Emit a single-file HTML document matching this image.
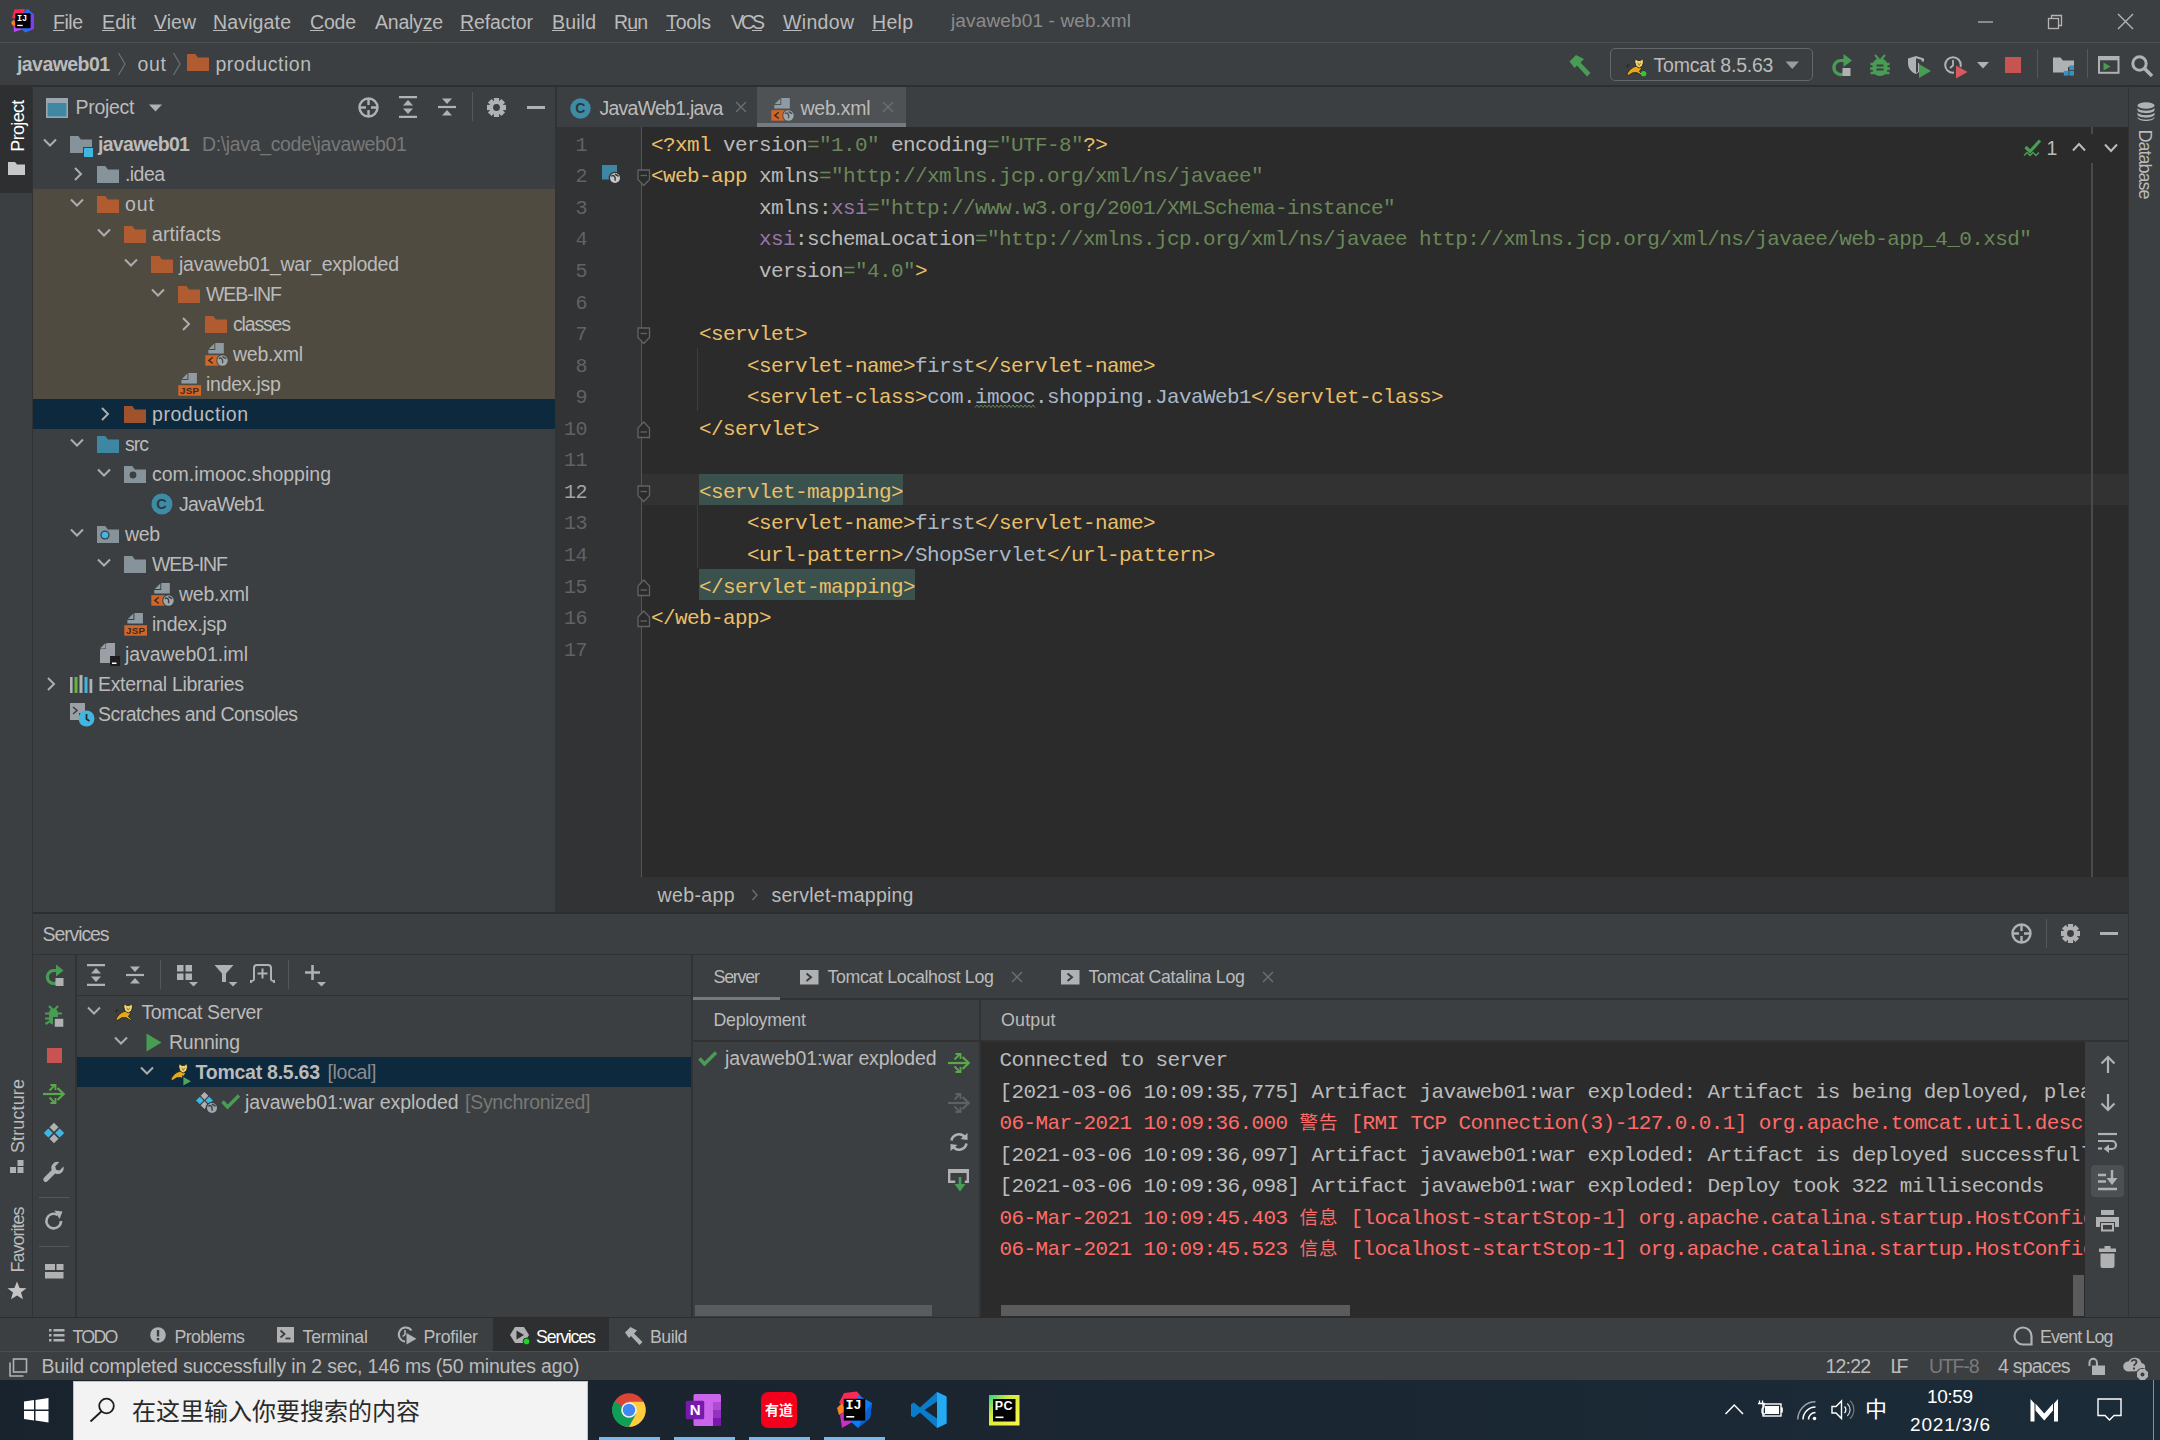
<!DOCTYPE html><html><head><meta charset="utf-8"><title>javaweb01 - web.xml</title><style>
html,body{margin:0;padding:0;background:#3c3f41;}
#r{position:relative;width:2160px;height:1440px;overflow:hidden;background:#3c3f41;font-family:"Liberation Sans","Noto Sans CJK SC",sans-serif;}
#r div,#r span,#r svg{position:absolute;}
#r span{white-space:pre;line-height:30px;}
#r span span,#r span u{position:static;}
#r u{text-underline-offset:0.5px;text-decoration-thickness:1.3px;}
.m{font-family:"Liberation Mono","Noto Sans CJK SC",monospace;font-size:21px;letter-spacing:-0.6px;}
</style></head><body><div id="r">
<div style="left:0px;top:42px;width:2160px;height:1px;background:#515151;"></div>
<svg style="left:10px;top:8px;overflow:visible;" width="26" height="26" viewBox="0 0 26 26"><polygon points="2,10 4.500,1.500 15,1 12,12" fill="#fe2857"/><polygon points="1,14.500 4,11.500 6,17 3,18" fill="#fc801d"/><polygon points="3.500,17.500 12,17 12,21.500 4,24" fill="#b74af7"/><polygon points="12,6 17.500,0.800 24,6.500 24,21 15.500,24.500 11,21" fill="#2d6bf5"/><polygon points="20,6 24,6.500 24,21 20,22" fill="#7a3ff0"/><rect x="5.300" y="5.300" width="15.300" height="15" rx="1" fill="#000"/><rect x="7.200" y="16.800" width="5.500" height="1.300" fill="#fff"/></svg>
<span style="left:17px;top:3.6999999999999993px;font-size:8.5px;color:#fff;font-weight:bold;letter-spacing:0px;font-family:'Liberation Mono',monospace;">IJ</span>
<span style="left:53px;top:6.5px;font-size:19.5px;color:#bbbbbb;letter-spacing:-0.47px;"><u>F</u>ile</span>
<span style="left:102px;top:6.5px;font-size:19.5px;color:#bbbbbb;letter-spacing:0.13px;"><u>E</u>dit</span>
<span style="left:154px;top:6.5px;font-size:19.5px;color:#bbbbbb;letter-spacing:0.03px;"><u>V</u>iew</span>
<span style="left:213px;top:6.5px;font-size:19.5px;color:#bbbbbb;letter-spacing:0.15px;"><u>N</u>avigate</span>
<span style="left:310px;top:6.5px;font-size:19.5px;color:#bbbbbb;letter-spacing:-0.21px;"><u>C</u>ode</span>
<span style="left:375px;top:6.5px;font-size:19.5px;color:#bbbbbb;letter-spacing:-0.23px;">Analy<u>z</u>e</span>
<span style="left:460px;top:6.5px;font-size:19.5px;color:#bbbbbb;letter-spacing:-0.10px;"><u>R</u>efactor</span>
<span style="left:552px;top:6.5px;font-size:19.5px;color:#bbbbbb;letter-spacing:0.16px;"><u>B</u>uild</span>
<span style="left:614px;top:6.5px;font-size:19.5px;color:#bbbbbb;letter-spacing:-0.89px;">R<u>u</u>n</span>
<span style="left:666px;top:6.5px;font-size:19.5px;color:#bbbbbb;letter-spacing:-0.13px;"><u>T</u>ools</span>
<span style="left:731px;top:6.5px;font-size:19.5px;color:#bbbbbb;letter-spacing:-3.05px;">VC<u>S</u></span>
<span style="left:783px;top:6.5px;font-size:19.5px;color:#bbbbbb;letter-spacing:0.33px;"><u>W</u>indow</span>
<span style="left:872px;top:6.5px;font-size:19.5px;color:#bbbbbb;letter-spacing:0.30px;"><u>H</u>elp</span>
<span style="left:951px;top:5.5px;font-size:19px;color:#8c8c8c;letter-spacing:0.14px;">javaweb01 - web.xml</span>
<svg style="left:1976px;top:12px;overflow:visible;" width="20" height="20" viewBox="0 0 20 20"><line x1="2" y1="10" x2="17" y2="10" stroke="#b4b4b4" stroke-width="1.3"/></svg>
<svg style="left:2046px;top:12px;overflow:visible;" width="20" height="20" viewBox="0 0 20 20"><rect x="2.5" y="6.5" width="10" height="10" fill="none" stroke="#b4b4b4" stroke-width="1.3"/><polyline points="5.5,6.5 5.5,3.5 15.5,3.5 15.5,13.5 12.5,13.5" fill="none" stroke="#b4b4b4" stroke-width="1.3"/></svg>
<svg style="left:2115px;top:11px;overflow:visible;" width="22" height="22" viewBox="0 0 22 22"><path d="M3 3L18 18M18 3L3 18" stroke="#b4b4b4" stroke-width="1.4"/></svg>
<div style="left:0px;top:85px;width:2160px;height:2px;background:#2d2f30;"></div>
<span style="left:17px;top:49.0px;font-size:19.5px;color:#bbbbbb;font-weight:bold;letter-spacing:-0.57px;">javaweb01</span>
<span style="left:137.5px;top:49.0px;font-size:19.5px;color:#bbb;letter-spacing:0.70px;">out</span>
<span style="left:215.5px;top:49.0px;font-size:19.5px;color:#bbb;letter-spacing:0.49px;">production</span>
<svg style="left:116.5px;top:52px;overflow:visible;" width="10" height="24" viewBox="0 0 10 24"><polyline points="1.5,1 8,12 1.5,23" fill="none" stroke="#6e7173" stroke-width="1.2"/></svg>
<svg style="left:171.5px;top:52px;overflow:visible;" width="10" height="24" viewBox="0 0 10 24"><polyline points="1.5,1 8,12 1.5,23" fill="none" stroke="#6e7173" stroke-width="1.2"/></svg>
<svg style="left:187px;top:54px;overflow:visible;" width="22" height="17" viewBox="0 0 22 17"><path d="M0 0h8.3l2.6 3.4H22V17H0z" fill="#b15c30"/></svg>
<svg style="left:1567px;top:53px;overflow:visible;" width="26" height="24" viewBox="0 0 26 24"><path d="M2.5 8.5L9 2l8 4-3.5 3.5L23.5 20 20 23.5 10 12.5 7.5 15z" fill="#499c54"/></svg>
<div style="left:1610px;top:48px;width:201px;height:31px;border:1px solid #646769;border-radius:5px;box-sizing:content-box;"></div>
<svg style="left:1625px;top:57.5px;overflow:visible;" width="22" height="18.6" viewBox="0 0 26 22"><path d="M5.500 8.500C2 7 1.500 10 3.500 11.500" fill="none" stroke="#1e1a12" stroke-width="1.100"/><path d="M2 19.500c2-4 5-7.500 9-9l4.500-1.500 4 3.500-2.500 3.500 4 3.500-1.500.8-5.500-3-5 .2-4.500 3z" fill="#e3a81b" stroke="#1e1a12" stroke-width=".9"/><path d="M11.500 4.500l.8-3.500 2.800 2h3.300l2.600-2 .9 3.700-1.400 4.800-3.700 2.300-3.800-2.300z" fill="#f0d67a" stroke="#1e1a12" stroke-width=".9"/><path d="M15 5.500l1.800 3.300 1.800-3.300" fill="none" stroke="#8a6a14" stroke-width="1"/><circle cx="22" cy="18.500" r="3.200" fill="#22d12a"/></svg>
<span style="left:1653.5px;top:49.5px;font-size:19.5px;color:#bbb;letter-spacing:-0.21px;">Tomcat 8.5.63</span>
<svg style="left:1785px;top:61px;overflow:visible;" width="15" height="9" viewBox="0 0 15 9"><polygon points="0.5,0.5 14,0.5 7.25,8" fill="#9a9da0"/></svg>
<svg style="left:1831px;top:54px;overflow:visible;" width="22" height="23" viewBox="0 0 22 23"><path d="M14.500 6.500h-4.500a7 7 0 1 0 3.500 13" fill="none" stroke="#499c54" stroke-width="3.200"/><polygon points="12.500,0 21,6.500 12.500,13" fill="#499c54"/><rect x="11.500" y="14" width="8" height="8" fill="#afb1b3"/></svg>
<svg style="left:1869px;top:54px;overflow:visible;" width="22" height="23" viewBox="0 0 22 23"><path d="M6 1l3.500 4M16 1l-3.500 4" stroke="#499c54" stroke-width="2"/><path d="M1.500 10h19M1 14.500h20M1.500 19h19" stroke="#499c54" stroke-width="2.400"/><rect x="3.500" y="4.500" width="15" height="17.500" rx="7" fill="#499c54"/><path d="M7.500 11.500h7M7.500 15.500h7" stroke="#3c3f41" stroke-width="1.800"/></svg>
<svg style="left:1907px;top:55px;overflow:visible;" width="26" height="24" viewBox="0 0 26 24"><path d="M1 3.5L9 1l8 2.5v3h-5V17l-3 2C4 17 1 13 1 8z" fill="#afb1b3"/><path d="M9 3v14" stroke="#3c3f41" stroke-width="0"/><path d="M9 3.2l5.5 1.6V8H11v8.5L9 18z" fill="#3c3f41"/><polygon points="12,9 24,16 12,23" fill="#499c54"/></svg>
<svg style="left:1943px;top:55px;overflow:visible;" width="26" height="24" viewBox="0 0 26 24"><circle cx="10" cy="10" r="7.8" fill="none" stroke="#afb1b3" stroke-width="2"/><path d="M10 5v5.5l-3 2.5" fill="none" stroke="#afb1b3" stroke-width="1.8"/><polygon points="11,8.5 11,24 25,16.2" fill="#3c3f41"/><polygon points="13,10.5 13,23.5 24.5,17" fill="#db5860"/></svg>
<svg style="left:1977px;top:62px;overflow:visible;" width="12" height="7" viewBox="0 0 12 7"><polygon points="0,0 12,0 6,6.5" fill="#afb1b3"/></svg>
<div style="left:2005px;top:57px;width:16px;height:16px;background:#c75450;"></div>
<div style="left:2037px;top:49px;width:1px;height:29px;background:#555759;"></div>
<svg style="left:2052.5px;top:56.5px;overflow:visible;" width="22" height="19" viewBox="0 0 22 19"><path d="M0 0.500h7.500l2.500 3H21v6.500h-6v5.500H0z" fill="#afb1b3"/><rect x="16.300" y="8.400" width="4.700" height="4.700" fill="#3592c4"/><rect x="10.800" y="13.900" width="4.700" height="4.700" fill="#3592c4"/><rect x="16.300" y="13.900" width="4.700" height="4.700" fill="#3592c4"/></svg>
<div style="left:2087px;top:49px;width:1px;height:29px;background:#555759;"></div>
<svg style="left:2098px;top:56px;overflow:visible;" width="22" height="18" viewBox="0 0 22 18"><rect x="1" y="1" width="19.500" height="15.800" fill="none" stroke="#afb1b3" stroke-width="2"/><rect x="1" y="1" width="19.500" height="3.300" fill="#afb1b3"/><polygon points="5.500,6.500 5.500,14.500 12.500,10.500" fill="#499c54"/></svg>
<svg style="left:2130px;top:54px;overflow:visible;" width="24" height="24" viewBox="0 0 24 24"><circle cx="9.5" cy="9.5" r="6.7" fill="none" stroke="#afb1b3" stroke-width="3"/><path d="M14.5 14.5L22 22" stroke="#afb1b3" stroke-width="3.6"/></svg>
<div style="left:0px;top:87px;width:32px;height:106px;background:#2d2f30;"></div>
<div style="left:32px;top:87px;width:1px;height:1230px;background:#323232;"></div>
<span style="left:17.5px;top:125.5px;font-size:18px;color:#ffffff;letter-spacing:-0.67px;transform:translate(-50%,-50%) rotate(-90deg);line-height:20px;">Project</span>
<svg style="left:8px;top:162px;overflow:visible;" width="18" height="14" viewBox="0 0 18 14"><path d="M0 0h7l2 2.6h8V13H0z" fill="#c8c8c8"/></svg>
<span style="left:17.5px;top:1115.5px;font-size:18px;color:#bbb;letter-spacing:0.12px;transform:translate(-50%,-50%) rotate(-90deg);line-height:20px;">Structure</span>
<svg style="left:10px;top:1159.5px;overflow:visible;" width="14" height="14" viewBox="0 0 14 14"><rect x="0" y="7" width="6" height="6" fill="#afb1b3"/><rect x="7.5" y="7" width="6" height="6" fill="#afb1b3"/><rect x="7.5" y="0" width="6" height="6" fill="#afb1b3"/></svg>
<span style="left:17.5px;top:1240px;font-size:18px;color:#bbb;letter-spacing:-1.00px;transform:translate(-50%,-50%) rotate(-90deg);line-height:20px;">Favorites</span>
<svg style="left:7px;top:1281px;overflow:visible;" width="20" height="19" viewBox="0 0 20 19"><polygon points="10,0.5 12.6,7 19.5,7.2 14,11.6 16,18.3 10,14.4 4,18.3 6,11.6 0.5,7.2 7.4,7" fill="#c4c4c4"/></svg>
<svg style="left:46px;top:98px;overflow:visible;" width="22" height="20" viewBox="0 0 22 20"><rect x="0.8" y="0.8" width="20.4" height="18.4" fill="#3f88a3" stroke="#9aa7b0" stroke-width="1.6"/><rect x="0" y="0" width="22" height="5" fill="#9aa7b0"/></svg>
<span style="left:75.5px;top:92.0px;font-size:19.5px;color:#bbb;letter-spacing:-0.28px;">Project</span>
<svg style="left:149px;top:104px;overflow:visible;" width="13" height="8" viewBox="0 0 13 8"><polygon points="0,0.5 13,0.5 6.5,7.5" fill="#afb1b3"/></svg>
<svg style="left:358.0px;top:96.5px;overflow:visible;" width="21" height="21" viewBox="0 0 21 21"><circle cx="10.5" cy="10.5" r="9" fill="none" stroke="#afb1b3" stroke-width="2.400"/><path d="M10.5 1v7M10.5 20v-7M1 10.5h7M20 10.5h-7" stroke="#afb1b3" stroke-width="2.400"/></svg>
<svg style="left:399px;top:96px;overflow:visible;" width="18" height="22" viewBox="0 0 18 22"><path d="M0 1.2h18M0 20.8h18" stroke="#afb1b3" stroke-width="2.2"/><polygon points="9,4 14,9.5 4,9.5" fill="#afb1b3"/><polygon points="9,18 14,12.5 4,12.5" fill="#afb1b3"/></svg>
<svg style="left:438px;top:96px;overflow:visible;" width="18" height="22" viewBox="0 0 18 22"><path d="M0 11h18" stroke="#afb1b3" stroke-width="2.2"/><polygon points="9,8 14,2.5 4,2.5" fill="#afb1b3"/><polygon points="9,14 14,19.5 4,19.5" fill="#afb1b3"/></svg>
<div style="left:472px;top:92px;width:1px;height:29px;background:#555759;"></div>
<svg style="left:486.0px;top:96.5px;overflow:visible;" width="21.0" height="21.0" viewBox="0 0 21.0 21.0"><g transform="translate(10.5,10.5)"><rect x="-2.6" y="-9.5" width="5.2" height="5" transform="rotate(0)" fill="#afb1b3"/><rect x="-2.6" y="-9.5" width="5.2" height="5" transform="rotate(45)" fill="#afb1b3"/><rect x="-2.6" y="-9.5" width="5.2" height="5" transform="rotate(90)" fill="#afb1b3"/><rect x="-2.6" y="-9.5" width="5.2" height="5" transform="rotate(135)" fill="#afb1b3"/><rect x="-2.6" y="-9.5" width="5.2" height="5" transform="rotate(180)" fill="#afb1b3"/><rect x="-2.6" y="-9.5" width="5.2" height="5" transform="rotate(225)" fill="#afb1b3"/><rect x="-2.6" y="-9.5" width="5.2" height="5" transform="rotate(270)" fill="#afb1b3"/><rect x="-2.6" y="-9.5" width="5.2" height="5" transform="rotate(315)" fill="#afb1b3"/><circle r="7.03" fill="#afb1b3"/><circle r="3.42" fill="#3c3f41"/></g></svg>
<div style="left:527.0px;top:105.5px;width:18px;height:3px;background:#afb1b3;"></div>
<div style="left:33px;top:189px;width:522px;height:210px;background:#4f4b41;"></div>
<div style="left:33px;top:399px;width:522px;height:30px;background:#0d293e;"></div>
<svg style="left:42px;top:137px;overflow:visible;" width="16" height="12" viewBox="0 0 16 12"><polyline points="2,2.5 8,8.5 14,2.5" fill="none" stroke="#adadad" stroke-width="2"/></svg>
<svg style="left:70px;top:135.5px;overflow:visible;" width="22" height="17" viewBox="0 0 22 17"><path d="M0 0h8.3l2.6 3.4H22V17H0z" fill="#87939a"/></svg>
<div style="left:82.5px;top:147px;width:2px;height:10px;background:#3c3f41;"></div>
<div style="left:82.5px;top:146.5px;width:10px;height:2px;background:#3c3f41;"></div>
<div style="left:84px;top:147.5px;width:9px;height:9px;background:#40b6e0;"></div>
<span style="left:98px;top:129.0px;font-size:19.5px;color:#bbb;font-weight:bold;letter-spacing:-0.70px;">javaweb01</span>
<svg style="left:72px;top:166px;overflow:visible;" width="12" height="16" viewBox="0 0 12 16"><polyline points="3,2 9,8 3,14" fill="none" stroke="#adadad" stroke-width="2"/></svg>
<svg style="left:97px;top:165.5px;overflow:visible;" width="22" height="17" viewBox="0 0 22 17"><path d="M0 0h8.3l2.6 3.4H22V17H0z" fill="#87939a"/></svg>
<span style="left:125px;top:159.0px;font-size:19.5px;color:#bbb;letter-spacing:-0.57px;">.idea</span>
<svg style="left:69px;top:197px;overflow:visible;" width="16" height="12" viewBox="0 0 16 12"><polyline points="2,2.5 8,8.5 14,2.5" fill="none" stroke="#adadad" stroke-width="2"/></svg>
<svg style="left:97px;top:195.5px;overflow:visible;" width="22" height="17" viewBox="0 0 22 17"><path d="M0 0h8.3l2.6 3.4H22V17H0z" fill="#b15c30"/></svg>
<span style="left:125px;top:189.0px;font-size:19.5px;color:#bbb;letter-spacing:0.95px;">out</span>
<svg style="left:96px;top:227px;overflow:visible;" width="16" height="12" viewBox="0 0 16 12"><polyline points="2,2.5 8,8.5 14,2.5" fill="none" stroke="#adadad" stroke-width="2"/></svg>
<svg style="left:124px;top:225.5px;overflow:visible;" width="22" height="17" viewBox="0 0 22 17"><path d="M0 0h8.3l2.6 3.4H22V17H0z" fill="#b15c30"/></svg>
<span style="left:152px;top:219.0px;font-size:19.5px;color:#bbb;letter-spacing:0.09px;">artifacts</span>
<svg style="left:123px;top:257px;overflow:visible;" width="16" height="12" viewBox="0 0 16 12"><polyline points="2,2.5 8,8.5 14,2.5" fill="none" stroke="#adadad" stroke-width="2"/></svg>
<svg style="left:151px;top:255.5px;overflow:visible;" width="22" height="17" viewBox="0 0 22 17"><path d="M0 0h8.3l2.6 3.4H22V17H0z" fill="#b15c30"/></svg>
<span style="left:179px;top:249.0px;font-size:19.5px;color:#bbb;letter-spacing:-0.26px;">javaweb01_war_exploded</span>
<svg style="left:150px;top:287px;overflow:visible;" width="16" height="12" viewBox="0 0 16 12"><polyline points="2,2.5 8,8.5 14,2.5" fill="none" stroke="#adadad" stroke-width="2"/></svg>
<svg style="left:178px;top:285.5px;overflow:visible;" width="22" height="17" viewBox="0 0 22 17"><path d="M0 0h8.3l2.6 3.4H22V17H0z" fill="#b15c30"/></svg>
<span style="left:206px;top:279.0px;font-size:19.5px;color:#bbb;letter-spacing:-1.05px;">WEB-INF</span>
<svg style="left:180px;top:316px;overflow:visible;" width="12" height="16" viewBox="0 0 12 16"><polyline points="3,2 9,8 3,14" fill="none" stroke="#adadad" stroke-width="2"/></svg>
<svg style="left:205px;top:315.5px;overflow:visible;" width="22" height="17" viewBox="0 0 22 17"><path d="M0 0h8.3l2.6 3.4H22V17H0z" fill="#b15c30"/></svg>
<span style="left:233px;top:309.0px;font-size:19.5px;color:#bbb;letter-spacing:-1.17px;">classes</span>
<svg style="left:205px;top:343.2px;overflow:visible;" width="24" height="24" viewBox="0 0 24 24"><g transform="translate(3.3,0)" fill="#8f9ba3"><path d="M7 0h8.5v10.5H0V6.9h7z"/><path d="M0.5 6L6 0.5V6z"/></g><rect x="0.3" y="12.2" width="14" height="10.5" fill="#d1662b"/><path d="M7.8 14.3l-4 3.1 4 3.1" fill="none" stroke="#3f2a1d" stroke-width="1.4"/><circle cx="17.5" cy="17.5" r="6.3" fill="#4f4b41"/><circle cx="17.5" cy="17.5" r="5.2" fill="#9ea7ae"/><path d="M14 16c1.200-2 2.800-.5 3.500.8s-.8 2.200.6 3.200M17.500 13.500c1 1.400 2.500.5 3.500 2.500" fill="none" stroke="#4f4b41" stroke-width="1.400"/></svg>
<span style="left:233px;top:339.0px;font-size:19.5px;color:#bbb;letter-spacing:-0.25px;">web.xml</span>
<svg style="left:178px;top:373.2px;overflow:visible;" width="24" height="24" viewBox="0 0 24 24"><g transform="translate(3.4,0)" fill="#8f9ba3"><path d="M7 0h8.5v10.5H0V6.9h7z"/><path d="M0.5 6L6 0.5V6z"/></g><rect x="0.3" y="12.2" width="22.700" height="10.500" fill="#d1662b"/></svg>
<span style="left:180px;top:376.0px;font-size:9.8px;color:#3f2a1d;font-weight:bold;letter-spacing:0.24px;">JSP</span>
<span style="left:206px;top:369.0px;font-size:19.5px;color:#bbb;letter-spacing:-0.25px;">index.jsp</span>
<svg style="left:99px;top:406px;overflow:visible;" width="12" height="16" viewBox="0 0 12 16"><polyline points="3,2 9,8 3,14" fill="none" stroke="#adadad" stroke-width="2"/></svg>
<svg style="left:124px;top:405.5px;overflow:visible;" width="22" height="17" viewBox="0 0 22 17"><path d="M0 0h8.3l2.6 3.4H22V17H0z" fill="#a0522d"/></svg>
<span style="left:152px;top:399.0px;font-size:19.5px;color:#bbb;letter-spacing:0.55px;">production</span>
<svg style="left:69px;top:437px;overflow:visible;" width="16" height="12" viewBox="0 0 16 12"><polyline points="2,2.5 8,8.5 14,2.5" fill="none" stroke="#adadad" stroke-width="2"/></svg>
<svg style="left:97px;top:435.5px;overflow:visible;" width="22" height="17" viewBox="0 0 22 17"><path d="M0 0h8.3l2.6 3.4H22V17H0z" fill="#3e87a3"/></svg>
<span style="left:125px;top:429.0px;font-size:19.5px;color:#bbb;letter-spacing:-1.00px;">src</span>
<svg style="left:96px;top:467px;overflow:visible;" width="16" height="12" viewBox="0 0 16 12"><polyline points="2,2.5 8,8.5 14,2.5" fill="none" stroke="#adadad" stroke-width="2"/></svg>
<svg style="left:124px;top:465.5px;overflow:visible;" width="22" height="17" viewBox="0 0 22 17"><path d="M0 0h8.3l2.6 3.4H22V17H0z" fill="#87939a"/></svg>
<svg style="left:128.5px;top:470.5px;overflow:visible;" width="8" height="8" viewBox="0 0 8 8"><circle cx="4" cy="4" r="3.4" fill="#3c3f41"/></svg>
<span style="left:152px;top:459.0px;font-size:19.5px;color:#bbb;letter-spacing:0.01px;">com.imooc.shopping</span>
<svg style="left:151px;top:493px;overflow:visible;" width="22" height="22" viewBox="0 0 22 22"><circle cx="11" cy="11" r="10.5" fill="#3d8ba5"/></svg>
<span style="left:156.3px;top:488.7px;font-size:14.5px;color:#2a3b42;font-weight:bold;">C</span>
<span style="left:179px;top:489.0px;font-size:19.5px;color:#bbb;letter-spacing:-0.83px;">JavaWeb1</span>
<svg style="left:69px;top:527px;overflow:visible;" width="16" height="12" viewBox="0 0 16 12"><polyline points="2,2.5 8,8.5 14,2.5" fill="none" stroke="#adadad" stroke-width="2"/></svg>
<svg style="left:97px;top:525.5px;overflow:visible;" width="22" height="17" viewBox="0 0 22 17"><path d="M0 0h8.3l2.6 3.4H22V17H0z" fill="#87939a"/></svg>
<svg style="left:100px;top:530px;overflow:visible;" width="10" height="10" viewBox="0 0 10 10"><circle cx="5" cy="5" r="4.6" fill="#3c3f41"/><circle cx="5" cy="5" r="3.3" fill="#40b6e0"/></svg>
<span style="left:125px;top:519.0px;font-size:19.5px;color:#bbb;letter-spacing:-0.39px;">web</span>
<svg style="left:96px;top:557px;overflow:visible;" width="16" height="12" viewBox="0 0 16 12"><polyline points="2,2.5 8,8.5 14,2.5" fill="none" stroke="#adadad" stroke-width="2"/></svg>
<svg style="left:124px;top:555.5px;overflow:visible;" width="22" height="17" viewBox="0 0 22 17"><path d="M0 0h8.3l2.6 3.4H22V17H0z" fill="#87939a"/></svg>
<span style="left:152px;top:549.0px;font-size:19.5px;color:#bbb;letter-spacing:-1.05px;">WEB-INF</span>
<svg style="left:151px;top:583.2px;overflow:visible;" width="24" height="24" viewBox="0 0 24 24"><g transform="translate(3.3,0)" fill="#8f9ba3"><path d="M7 0h8.5v10.5H0V6.9h7z"/><path d="M0.5 6L6 0.5V6z"/></g><rect x="0.3" y="12.2" width="14" height="10.5" fill="#d1662b"/><path d="M7.8 14.3l-4 3.1 4 3.1" fill="none" stroke="#3f2a1d" stroke-width="1.4"/><circle cx="17.5" cy="17.5" r="6.3" fill="#3c3f41"/><circle cx="17.5" cy="17.5" r="5.2" fill="#9ea7ae"/><path d="M14 16c1.200-2 2.800-.5 3.500.8s-.8 2.200.6 3.200M17.500 13.500c1 1.400 2.500.5 3.500 2.500" fill="none" stroke="#3c3f41" stroke-width="1.400"/></svg>
<span style="left:179px;top:579.0px;font-size:19.5px;color:#bbb;letter-spacing:-0.25px;">web.xml</span>
<svg style="left:124px;top:613.2px;overflow:visible;" width="24" height="24" viewBox="0 0 24 24"><g transform="translate(3.4,0)" fill="#8f9ba3"><path d="M7 0h8.5v10.5H0V6.9h7z"/><path d="M0.5 6L6 0.5V6z"/></g><rect x="0.3" y="12.2" width="22.700" height="10.500" fill="#d1662b"/></svg>
<span style="left:126px;top:616.0px;font-size:9.8px;color:#3f2a1d;font-weight:bold;letter-spacing:0.24px;">JSP</span>
<span style="left:152px;top:609.0px;font-size:19.5px;color:#bbb;letter-spacing:-0.25px;">index.jsp</span>
<svg style="left:100px;top:643px;overflow:visible;" width="22" height="24" viewBox="0 0 22 24"><path d="M7 0H15V20H0V7z" fill="#9aa0a5"/><path d="M0 6L6 0V6z" fill="#3c3f41"/><path d="M0 5.500L5.500 0V5.500z" fill="#9aa0a5"/><rect x="10" y="13" width="10" height="10" fill="#1e1e1e"/><rect x="12" y="19.500" width="4.500" height="1.500" fill="#fff"/></svg>
<span style="left:125px;top:639.0px;font-size:19.5px;color:#bbb;letter-spacing:-0.05px;">javaweb01.iml</span>
<svg style="left:45px;top:676px;overflow:visible;" width="12" height="16" viewBox="0 0 12 16"><polyline points="3,2 9,8 3,14" fill="none" stroke="#adadad" stroke-width="2"/></svg>
<svg style="left:70px;top:675px;overflow:visible;" width="23" height="18" viewBox="0 0 23 18"><rect x="0" y="2" width="2.6" height="16" fill="#afb1b3"/><rect x="4.500" y="2" width="3" height="16" fill="#62b543"/><rect x="9.500" y="0" width="3" height="18" fill="#afb1b3"/><rect x="14.500" y="2" width="3" height="16" fill="#40b6e0"/><rect x="19.500" y="4" width="2.800" height="14" fill="#afb1b3"/></svg>
<span style="left:98px;top:669.0px;font-size:19.5px;color:#bbb;letter-spacing:-0.34px;">External Libraries</span>
<svg style="left:70px;top:702px;overflow:visible;" width="25" height="25" viewBox="0 0 25 25"><path d="M0 1H15V11H9V18H0z" fill="#9aa0a5"/><path d="M3 5l4 3.500-4 3.500" fill="none" stroke="#3c3f41" stroke-width="1.600"/><circle cx="16.500" cy="16.500" r="8" fill="#40b6e0"/><path d="M16.500 12v5l3 2" fill="none" stroke="#2b2b2b" stroke-width="1.800"/></svg>
<span style="left:98px;top:699.0px;font-size:19.5px;color:#bbb;letter-spacing:-0.54px;">Scratches and Consoles</span>
<span style="left:202px;top:129.0px;font-size:19.5px;color:#787878;letter-spacing:-0.36px;">D:\java_code\javaweb01</span>
<div style="left:555px;top:87px;width:2px;height:826px;background:#323232;"></div>
<div style="left:557px;top:127px;width:1571px;height:750px;background:#2b2b2b;"></div>
<div style="left:557px;top:127px;width:84px;height:750px;background:#313335;"></div>
<div style="left:640.8px;top:127px;width:1.6px;height:750px;background:#555555;"></div>
<div style="left:757px;top:87px;width:149px;height:40px;background:#4e5254;"></div>
<div style="left:757px;top:122.5px;width:149px;height:4.5px;background:#747a80;"></div>
<svg style="left:570px;top:98px;overflow:visible;" width="21" height="21" viewBox="0 0 21 21"><circle cx="10.5" cy="10.5" r="10.2" fill="#3d8ba5"/></svg>
<span style="left:575.2px;top:93.0px;font-size:14px;color:#263840;font-weight:bold;">C</span>
<span style="left:599.5px;top:92.5px;font-size:19.5px;color:#bbb;letter-spacing:-0.75px;">JavaWeb1.java</span>
<svg style="left:735px;top:101px;overflow:visible;" width="12" height="12" viewBox="0 0 12 12"><path d="M1 1L11 11M11 1L1 11" stroke="#6e7073" stroke-width="1.3"/></svg>
<svg style="left:770.5px;top:97.5px;overflow:visible;" width="24" height="24" viewBox="0 0 24 24"><g transform="translate(3.3,0)" fill="#8f9ba3"><path d="M7 0h8.5v10.5H0V6.9h7z"/><path d="M0.5 6L6 0.5V6z"/></g><rect x="0.3" y="12.2" width="14" height="10.5" fill="#d1662b"/><path d="M7.8 14.3l-4 3.1 4 3.1" fill="none" stroke="#3f2a1d" stroke-width="1.4"/><circle cx="17.5" cy="17.5" r="6.3" fill="#4e5254"/><circle cx="17.5" cy="17.5" r="5.2" fill="#9ea7ae"/><path d="M14 16c1.200-2 2.800-.5 3.500.8s-.8 2.200.6 3.200M17.500 13.500c1 1.400 2.500.5 3.500 2.500" fill="none" stroke="#4e5254" stroke-width="1.400"/></svg>
<span style="left:800.5px;top:92.5px;font-size:19.5px;color:#bbb;letter-spacing:-0.25px;">web.xml</span>
<svg style="left:882px;top:101px;overflow:visible;" width="12" height="12" viewBox="0 0 12 12"><path d="M1 1L11 11M11 1L1 11" stroke="#6e7073" stroke-width="1.3"/></svg>
<div style="left:642.4px;top:474px;width:1485.6px;height:31px;background:#323232;"></div>
<div style="left:699px;top:474px;width:204px;height:31px;background:#3b514d;"></div>
<div style="left:699px;top:568.5px;width:216px;height:31.5px;background:#3b514d;"></div>
<span class="m" style="left:651px;top:130.7px;"><span style="color:#e8bf6a">&lt;?xml</span><span style="color:#bababa"> version</span><span style="color:#6a8759">=&quot;1.0&quot;</span><span style="color:#bababa"> encoding</span><span style="color:#6a8759">=&quot;UTF-8&quot;</span><span style="color:#e8bf6a">?&gt;</span></span>
<span class="m" style="left:651px;top:162.26px;"><span style="color:#e8bf6a">&lt;web-app</span><span style="color:#bababa"> xmlns</span><span style="color:#6a8759">=&quot;http://xmlns.jcp.org/xml/ns/javaee&quot;</span></span>
<span class="m" style="left:759px;top:193.82px;"><span style="color:#bababa">xmlns:</span><span style="color:#9876aa">xsi</span><span style="color:#6a8759">=&quot;http://www.w3.org/2001/XMLSchema-instance&quot;</span></span>
<span class="m" style="left:759px;top:225.38px;"><span style="color:#9876aa">xsi</span><span style="color:#bababa">:schemaLocation</span><span style="color:#6a8759">=&quot;http://xmlns.jcp.org/xml/ns/javaee http://xmlns.jcp.org/xml/ns/javaee/web-app_4_0.xsd&quot;</span></span>
<span class="m" style="left:759px;top:256.94px;"><span style="color:#bababa">version</span><span style="color:#6a8759">=&quot;4.0&quot;</span><span style="color:#e8bf6a">&gt;</span></span>
<span class="m" style="left:699px;top:320.05999999999995px;"><span style="color:#e8bf6a">&lt;servlet&gt;</span></span>
<span class="m" style="left:747px;top:351.62px;"><span style="color:#e8bf6a">&lt;servlet-name&gt;</span><span style="color:#a9b7c6">first</span><span style="color:#e8bf6a">&lt;/servlet-name&gt;</span></span>
<span class="m" style="left:747px;top:383.17999999999995px;"><span style="color:#e8bf6a">&lt;servlet-class&gt;</span><span style="color:#a9b7c6">com.imooc.shopping.JavaWeb1</span><span style="color:#e8bf6a">&lt;/servlet-class&gt;</span></span>
<span class="m" style="left:699px;top:414.73999999999995px;"><span style="color:#e8bf6a">&lt;/servlet&gt;</span></span>
<span class="m" style="left:699px;top:477.85999999999996px;"><span style="color:#e8bf6a">&lt;servlet-mapping&gt;</span></span>
<span class="m" style="left:747px;top:509.41999999999996px;"><span style="color:#e8bf6a">&lt;servlet-name&gt;</span><span style="color:#a9b7c6">first</span><span style="color:#e8bf6a">&lt;/servlet-name&gt;</span></span>
<span class="m" style="left:747px;top:540.98px;"><span style="color:#e8bf6a">&lt;url-pattern&gt;</span><span style="color:#a9b7c6">/ShopServlet</span><span style="color:#e8bf6a">&lt;/url-pattern&gt;</span></span>
<span class="m" style="left:699px;top:572.54px;"><span style="color:#e8bf6a">&lt;/servlet-mapping&gt;</span></span>
<span class="m" style="left:651px;top:604.0999999999999px;"><span style="color:#e8bf6a">&lt;/web-app&gt;</span></span>
<span class="m" style="left:575.5px;top:130.7px;color:#606366;font-size:20px;letter-spacing:-0.5px;">1</span>
<span class="m" style="left:575.5px;top:162.26px;color:#606366;font-size:20px;letter-spacing:-0.5px;">2</span>
<span class="m" style="left:575.5px;top:193.82px;color:#606366;font-size:20px;letter-spacing:-0.5px;">3</span>
<span class="m" style="left:575.5px;top:225.38px;color:#606366;font-size:20px;letter-spacing:-0.5px;">4</span>
<span class="m" style="left:575.5px;top:256.94px;color:#606366;font-size:20px;letter-spacing:-0.5px;">5</span>
<span class="m" style="left:575.5px;top:288.5px;color:#606366;font-size:20px;letter-spacing:-0.5px;">6</span>
<span class="m" style="left:575.5px;top:320.05999999999995px;color:#606366;font-size:20px;letter-spacing:-0.5px;">7</span>
<span class="m" style="left:575.5px;top:351.62px;color:#606366;font-size:20px;letter-spacing:-0.5px;">8</span>
<span class="m" style="left:575.5px;top:383.17999999999995px;color:#606366;font-size:20px;letter-spacing:-0.5px;">9</span>
<span class="m" style="left:564.0px;top:414.73999999999995px;color:#606366;font-size:20px;letter-spacing:-0.5px;">10</span>
<span class="m" style="left:564.0px;top:446.29999999999995px;color:#606366;font-size:20px;letter-spacing:-0.5px;">11</span>
<span class="m" style="left:564.0px;top:477.85999999999996px;color:#a4a3a3;font-size:20px;letter-spacing:-0.5px;">12</span>
<span class="m" style="left:564.0px;top:509.41999999999996px;color:#606366;font-size:20px;letter-spacing:-0.5px;">13</span>
<span class="m" style="left:564.0px;top:540.98px;color:#606366;font-size:20px;letter-spacing:-0.5px;">14</span>
<span class="m" style="left:564.0px;top:572.54px;color:#606366;font-size:20px;letter-spacing:-0.5px;">15</span>
<span class="m" style="left:564.0px;top:604.0999999999999px;color:#606366;font-size:20px;letter-spacing:-0.5px;">16</span>
<span class="m" style="left:564.0px;top:635.66px;color:#606366;font-size:20px;letter-spacing:-0.5px;">17</span>
<div style="left:696.5px;top:348px;width:1px;height:63px;background:#3e3e3e;"></div>
<div style="left:696.5px;top:505px;width:1px;height:63px;background:#3e3e3e;"></div>
<svg style="left:975px;top:404px;overflow:visible;" width="60" height="5" viewBox="0 0 60 5"><path d="M0 3.500L2 1L4 3.5L6 1L8 3.5L10 1L12 3.5L14 1L16 3.5L18 1L20 3.5L22 1L24 3.5L26 1L28 3.5L30 1L32 3.5L34 1L36 3.5L38 1L40 3.5L42 1L44 3.5L46 1L48 3.5L50 1L52 3.5L54 1L56 3.5L58 1L60 3.5" fill="none" stroke="#5d8c57" stroke-width="1"/></svg>
<svg style="left:637px;top:169.26px;overflow:visible;" width="14" height="18" viewBox="0 0 14 18"><path d="M1 1h11.500v9.500L6.750 16.500 1 10.500z" fill="#2b2b2b" stroke="#606366" stroke-width="1.300"/><path d="M3.500 6.500h6.500" stroke="#606366" stroke-width="1.300"/></svg>
<svg style="left:637px;top:327.05999999999995px;overflow:visible;" width="14" height="18" viewBox="0 0 14 18"><path d="M1 1h11.500v9.500L6.750 16.500 1 10.500z" fill="#2b2b2b" stroke="#606366" stroke-width="1.300"/><path d="M3.500 6.500h6.500" stroke="#606366" stroke-width="1.300"/></svg>
<svg style="left:637px;top:484.85999999999996px;overflow:visible;" width="14" height="18" viewBox="0 0 14 18"><path d="M1 1h11.500v9.500L6.750 16.500 1 10.500z" fill="#2b2b2b" stroke="#606366" stroke-width="1.300"/><path d="M3.500 6.500h6.500" stroke="#606366" stroke-width="1.300"/></svg>
<svg style="left:637px;top:420.73999999999995px;overflow:visible;" width="14" height="18" viewBox="0 0 14 18"><path d="M1 16.500h11.500V7L6.750 1 1 7z" fill="#2b2b2b" stroke="#606366" stroke-width="1.300"/><path d="M3.500 11h6.500" stroke="#606366" stroke-width="1.300"/></svg>
<svg style="left:637px;top:578.54px;overflow:visible;" width="14" height="18" viewBox="0 0 14 18"><path d="M1 16.500h11.500V7L6.750 1 1 7z" fill="#2b2b2b" stroke="#606366" stroke-width="1.300"/><path d="M3.500 11h6.500" stroke="#606366" stroke-width="1.300"/></svg>
<svg style="left:637px;top:610.0999999999999px;overflow:visible;" width="14" height="18" viewBox="0 0 14 18"><path d="M1 16.500h11.500V7L6.750 1 1 7z" fill="#2b2b2b" stroke="#606366" stroke-width="1.300"/><path d="M3.500 11h6.500" stroke="#606366" stroke-width="1.300"/></svg>
<svg style="left:601.5px;top:164.5px;overflow:visible;" width="20" height="20" viewBox="0 0 20 20"><rect x="0" y="0" width="15" height="14.500" fill="#3e87a3"/><circle cx="13" cy="13" r="6.300" fill="#313335"/><circle cx="13" cy="13" r="5" fill="#c3c6c8"/><path d="M9.500 11.500c1.200-2 2.800-.5 3.500.8s-.8 2.200.6 3.200M13 9c1 1.400 2.500.5 3.500 2.500" fill="none" stroke="#313335" stroke-width="1.400"/></svg>
<div style="left:2091.3px;top:127px;width:1.5px;height:750px;background:#4a4a4a;"></div>
<div style="left:2010px;top:134px;width:118px;height:29px;background:#2b2b2b;"></div>
<svg style="left:2023px;top:139px;overflow:visible;" width="20" height="20" viewBox="0 0 20 20"><path d="M2.500 8l4.500 4.500L17 1.500" fill="none" stroke="#499c54" stroke-width="3.200"/><path d="M1 16.500l3-3 3 3 3-3 3 3 3-3" fill="none" stroke="#499c54" stroke-width="1.400"/></svg>
<span style="left:2046.5px;top:133.0px;font-size:19.5px;color:#bbb;">1</span>
<svg style="left:2071px;top:141px;overflow:visible;" width="16" height="12" viewBox="0 0 16 12"><polyline points="2,9.500 8,3 14,9.500" fill="none" stroke="#bbbbbb" stroke-width="2"/></svg>
<svg style="left:2103px;top:142px;overflow:visible;" width="16" height="12" viewBox="0 0 16 12"><polyline points="2,2.500 8,9 14,2.500" fill="none" stroke="#bbbbbb" stroke-width="2"/></svg>
<div style="left:557px;top:876.5px;width:1571px;height:36.5px;background:#313335;"></div>
<span style="left:657.5px;top:879.5px;font-size:19.5px;color:#bbb;letter-spacing:0.37px;">web-app</span>
<span style="left:771.5px;top:879.5px;font-size:19.5px;color:#bbb;letter-spacing:0.23px;">servlet-mapping</span>
<svg style="left:751px;top:889px;overflow:visible;" width="8" height="12" viewBox="0 0 8 12"><polyline points="1.500,1 6,6 1.500,11" fill="none" stroke="#6e7073" stroke-width="1.300"/></svg>
<div style="left:2128px;top:87px;width:1px;height:1230px;background:#323232;"></div>
<svg style="left:2136.5px;top:102px;overflow:visible;" width="19" height="19" viewBox="0 0 19 19"><ellipse cx="9" cy="3.500" rx="8.500" ry="3.200" fill="#afb1b3"/><path d="M0.500 6c2 3.500 15 3.500 17 0v2.500c-2 3.500-15 3.500-17 0zM0.500 10.500c2 3.500 15 3.500 17 0V13c-2 3.500-15 3.500-17 0zM0.500 15c2 3.500 15 3.500 17 0v1c-2 4-15 4-17 0z" fill="#afb1b3"/></svg>
<span style="left:2144.5px;top:164px;font-size:18px;color:#bbb;letter-spacing:-1.01px;transform:translate(-50%,-50%) rotate(90deg);line-height:20px;">Database</span>
<div style="left:33px;top:912px;width:2095px;height:2px;background:#2b2d2e;"></div>
<span style="left:42.5px;top:919.0px;font-size:19.5px;color:#bbb;letter-spacing:-1.11px;">Services</span>
<div style="left:33px;top:953.5px;width:2095px;height:1.5px;background:#323232;"></div>
<svg style="left:2010.5px;top:922.5px;overflow:visible;" width="21" height="21" viewBox="0 0 21 21"><circle cx="10.5" cy="10.5" r="9" fill="none" stroke="#afb1b3" stroke-width="2.400"/><path d="M10.5 1v7M10.5 20v-7M1 10.5h7M20 10.5h-7" stroke="#afb1b3" stroke-width="2.400"/></svg>
<div style="left:2046px;top:919px;width:1px;height:29px;background:#555759;"></div>
<svg style="left:2059.5px;top:922.5px;overflow:visible;" width="21.0" height="21.0" viewBox="0 0 21.0 21.0"><g transform="translate(10.5,10.5)"><rect x="-2.6" y="-9.5" width="5.2" height="5" transform="rotate(0)" fill="#afb1b3"/><rect x="-2.6" y="-9.5" width="5.2" height="5" transform="rotate(45)" fill="#afb1b3"/><rect x="-2.6" y="-9.5" width="5.2" height="5" transform="rotate(90)" fill="#afb1b3"/><rect x="-2.6" y="-9.5" width="5.2" height="5" transform="rotate(135)" fill="#afb1b3"/><rect x="-2.6" y="-9.5" width="5.2" height="5" transform="rotate(180)" fill="#afb1b3"/><rect x="-2.6" y="-9.5" width="5.2" height="5" transform="rotate(225)" fill="#afb1b3"/><rect x="-2.6" y="-9.5" width="5.2" height="5" transform="rotate(270)" fill="#afb1b3"/><rect x="-2.6" y="-9.5" width="5.2" height="5" transform="rotate(315)" fill="#afb1b3"/><circle r="7.03" fill="#afb1b3"/><circle r="3.42" fill="#3c3f41"/></g></svg>
<div style="left:2100.0px;top:931.5px;width:18px;height:3px;background:#afb1b3;"></div>
<div style="left:75.3px;top:955px;width:1.5px;height:362px;background:#323232;"></div>
<div style="left:76px;top:994.5px;width:615px;height:1.5px;background:#323232;"></div>
<div style="left:691px;top:955px;width:2px;height:362px;background:#323232;"></div>
<svg style="left:43px;top:964px;overflow:visible;" width="24" height="24" viewBox="0 0 24 24"><path d="M15.500 6.500h-5a6.500 6.500 0 1 0 4.500 11.500" fill="none" stroke="#499c54" stroke-width="3"/><polygon points="13,0.500 20.500,6.500 13,12.500" fill="#499c54"/><rect x="12.500" y="14" width="8" height="8" fill="#afb1b3"/></svg>
<svg style="left:44px;top:1005px;overflow:visible;" width="22" height="23" viewBox="0 0 22 23"><g stroke="#499c54" stroke-width="2.200"><path d="M5 1l3.500 3.500M14 1l-3.500 3.500M1 8.500h4M1 13.500h4M1.500 19l4-2.500M14 8.500h4"/></g><path d="M9.500 3.500a4.500 4.500 0 0 1 4.500 4.500v7a4.500 4.500 0 0 1-9 0v-7a4.500 4.500 0 0 1 4.500-4.500z" fill="#499c54"/><rect x="9" y="12" width="12" height="11" fill="#3c3f41"/><rect x="10.800" y="13.800" width="8.500" height="8" fill="#afb1b3"/></svg>
<div style="left:46.5px;top:1047.5px;width:15.5px;height:15px;background:#c75450;"></div>
<svg style="left:43px;top:1083px;overflow:visible;" width="22" height="22" viewBox="0 0 22 22"><g transform="translate(11,11)" fill="none" stroke="#59a84b"><path d="M-11 0h20" stroke-width="2.200"/><polyline points="3.500,-6 9.700,0 3.500,6" stroke-width="2.200"/><path d="M-4.500 -3.500l5.500-5.500M-4.500 3.500l5.500 5.500" stroke-width="1.800"/><polyline points="-3.500,-9 1.500,-9 1.500,-4" stroke-width="1.800"/><polyline points="-3.500,9 1.500,9 1.500,4" stroke-width="1.800"/></g></svg>
<svg style="left:43px;top:1122px;overflow:visible;" width="22" height="22" viewBox="0 0 22 22"><g transform="translate(11,11) rotate(45)"><rect x="-7.200" y="-7.200" width="6.400" height="6.400" fill="#afb1b3"/><rect x="0.800" y="0.800" width="6.400" height="6.400" fill="#afb1b3"/><rect x="0.800" y="-7.200" width="6.400" height="6.400" fill="#40b6e0"/><rect x="-7.200" y="0.800" width="6.400" height="6.400" fill="#40b6e0"/></g></svg>
<svg style="left:43px;top:1161px;overflow:visible;" width="22" height="22" viewBox="0 0 22 22"><path d="M20.500 5.500l-4 4-3.500-.8-.8-3.500 4-4a6 6 0 0 0-7.500 7.800L1 16.800a2.400 2.400 0 0 0 3.400 3.400L12.200 12.500a6 6 0 0 0 8.300-7z" fill="#afb1b3"/></svg>
<div style="left:39px;top:1197px;width:30px;height:1px;background:#555759;"></div>
<svg style="left:43px;top:1210px;overflow:visible;" width="22" height="22" viewBox="0 0 22 22"><path d="M18 11a7.300 7.300 0 1 1-3.500-6.200" fill="none" stroke="#afb1b3" stroke-width="2.600"/><polygon points="11.500,0.500 19.500,1.500 16.500,9" fill="#afb1b3"/></svg>
<div style="left:39px;top:1246px;width:30px;height:1px;background:#555759;"></div>
<svg style="left:45px;top:1264px;overflow:visible;" width="19" height="15" viewBox="0 0 19 15"><rect x="0" y="0" width="10" height="6" fill="#afb1b3"/><rect x="11.500" y="0" width="7" height="6" fill="#afb1b3"/><rect x="0" y="8" width="18.500" height="6.500" fill="#afb1b3"/></svg>
<svg style="left:87px;top:963.5px;overflow:visible;" width="18" height="22" viewBox="0 0 18 22"><path d="M0 1.2h18M0 20.8h18" stroke="#afb1b3" stroke-width="2.2"/><polygon points="9,4 14,9.5 4,9.5" fill="#afb1b3"/><polygon points="9,18 14,12.5 4,12.5" fill="#afb1b3"/></svg>
<svg style="left:126px;top:963.5px;overflow:visible;" width="18" height="22" viewBox="0 0 18 22"><path d="M0 11h18" stroke="#afb1b3" stroke-width="2.2"/><polygon points="9,8 14,2.5 4,2.5" fill="#afb1b3"/><polygon points="9,14 14,19.5 4,19.5" fill="#afb1b3"/></svg>
<div style="left:160px;top:960px;width:1px;height:29px;background:#555759;"></div>
<svg style="left:176px;top:964px;overflow:visible;" width="23" height="23" viewBox="0 0 23 23"><rect x="1" y="1" width="6.500" height="6.500" fill="#afb1b3"/><rect x="9.500" y="1" width="6.500" height="6.500" fill="#afb1b3"/><rect x="1" y="9.500" width="6.500" height="6.500" fill="#afb1b3"/><rect x="9.500" y="9.500" width="6.500" height="6.500" fill="#afb1b3"/><polygon points="13,18 22,18 17.500,22.500" fill="#afb1b3"/></svg>
<svg style="left:214px;top:964px;overflow:visible;" width="24" height="23" viewBox="0 0 24 23"><path d="M0.500 1h19l-7.500 8.500v8.500h-4v-8.500z" fill="#afb1b3"/><polygon points="14.500,18 23.500,18 19,22.500" fill="#afb1b3"/></svg>
<svg style="left:250px;top:963px;overflow:visible;" width="26" height="22" viewBox="0 0 26 22"><path d="M1 20v-2c3 0 3-1 3-3V5c0-2 1-3 3-3h11c2 0 3 1 3 3v10c0 2 0 3 3 3v2" fill="none" stroke="#afb1b3" stroke-width="2"/><path d="M12.500 5.500v10M7.500 10.500h10" stroke="#afb1b3" stroke-width="2"/></svg>
<div style="left:287.5px;top:960px;width:1px;height:29px;background:#555759;"></div>
<svg style="left:304px;top:964px;overflow:visible;" width="23" height="23" viewBox="0 0 23 23"><path d="M8.500 1v15M1 8.500h15" stroke="#afb1b3" stroke-width="2.600"/><polygon points="13,18 22,18 17.500,22.500" fill="#afb1b3"/></svg>
<div style="left:76.5px;top:1057px;width:614.5px;height:30px;background:#0d293e;"></div>
<svg style="left:85.5px;top:1005px;overflow:visible;" width="16" height="12" viewBox="0 0 16 12"><polyline points="2,2.5 8,8.5 14,2.5" fill="none" stroke="#adadad" stroke-width="2"/></svg>
<svg style="left:114px;top:1003px;overflow:visible;" width="22" height="18.6" viewBox="0 0 26 22"><path d="M5.500 8.500C2 7 1.500 10 3.500 11.500" fill="none" stroke="#1e1a12" stroke-width="1.100"/><path d="M2 19.500c2-4 5-7.500 9-9l4.500-1.500 4 3.500-2.500 3.500 4 3.500-1.500.8-5.500-3-5 .2-4.500 3z" fill="#e3a81b" stroke="#1e1a12" stroke-width=".9"/><path d="M11.500 4.500l.8-3.500 2.800 2h3.300l2.600-2 .9 3.700-1.400 4.800-3.700 2.300-3.800-2.300z" fill="#f0d67a" stroke="#1e1a12" stroke-width=".9"/><path d="M15 5.500l1.800 3.300 1.800-3.300" fill="none" stroke="#8a6a14" stroke-width="1"/></svg>
<span style="left:141.5px;top:997.0px;font-size:19.5px;color:#bbb;letter-spacing:-0.39px;">Tomcat Server</span>
<svg style="left:112.5px;top:1035px;overflow:visible;" width="16" height="12" viewBox="0 0 16 12"><polyline points="2,2.5 8,8.5 14,2.5" fill="none" stroke="#adadad" stroke-width="2"/></svg>
<svg style="left:145.5px;top:1033px;overflow:visible;" width="16" height="19" viewBox="0 0 16 19"><polygon points="0.500,0.500 15.500,9.500 0.500,18.500" fill="#499c54"/></svg>
<span style="left:169px;top:1027.0px;font-size:19.5px;color:#bbb;letter-spacing:-0.27px;">Running</span>
<svg style="left:139px;top:1065px;overflow:visible;" width="16" height="12" viewBox="0 0 16 12"><polyline points="2,2.5 8,8.5 14,2.5" fill="none" stroke="#adadad" stroke-width="2"/></svg>
<svg style="left:168.5px;top:1063px;overflow:visible;" width="22" height="18.6" viewBox="0 0 26 22"><path d="M5.500 8.500C2 7 1.500 10 3.500 11.500" fill="none" stroke="#1e1a12" stroke-width="1.100"/><path d="M2 19.500c2-4 5-7.500 9-9l4.500-1.500 4 3.500-2.500 3.500 4 3.500-1.500.8-5.500-3-5 .2-4.500 3z" fill="#e3a81b" stroke="#1e1a12" stroke-width=".9"/><path d="M11.500 4.500l.8-3.500 2.800 2h3.300l2.600-2 .9 3.700-1.400 4.800-3.700 2.300-3.800-2.300z" fill="#f0d67a" stroke="#1e1a12" stroke-width=".9"/><path d="M15 5.500l1.800 3.300 1.800-3.300" fill="none" stroke="#8a6a14" stroke-width="1"/><polygon points="15.500,14.500 26,20.500 15.500,26.500" fill="#0d293e"/><polygon points="17,16.500 26,21.500 17,26.500" fill="#4fa657"/></svg>
<span style="left:195.5px;top:1057.0px;font-size:19.5px;color:#bbb;font-weight:bold;letter-spacing:-0.25px;">Tomcat 8.5.63</span>
<span style="left:327.5px;top:1057.0px;font-size:19.5px;color:#8c8c8c;letter-spacing:-0.32px;">[local]</span>
<svg style="left:195px;top:1091px;overflow:visible;" width="25" height="24" viewBox="0 0 25 24"><g transform="translate(9.500,9.500) rotate(45)"><rect x="-6" y="-6" width="5.400" height="5.400" fill="#afb1b3"/><rect x="0.600" y="0.600" width="5.400" height="5.400" fill="#afb1b3"/><rect x="0.600" y="-6" width="5.400" height="5.400" fill="#40b6e0"/><rect x="-6" y="0.600" width="5.400" height="5.400" fill="#40b6e0"/></g><circle cx="17" cy="17" r="6.300" fill="#3c3f41"/><circle cx="17" cy="17" r="5" fill="#9ea7ae"/><path d="M13.500 15.500c1.200-2 2.800-.5 3.500.8s-.8 2.200.6 3.200M17 13c1 1.400 2.500.5 3.500 2.500" fill="none" stroke="#3c3f41" stroke-width="1.400"/></svg>
<svg style="left:221px;top:1093.5px;overflow:visible;" width="20" height="16" viewBox="0 0 20 16"><path d="M1.500 7.500l5 5.500L18 1.500" fill="none" stroke="#499c54" stroke-width="3.400"/></svg>
<span style="left:245px;top:1087.0px;font-size:19.5px;color:#bbb;letter-spacing:-0.05px;">javaweb01:war exploded</span>
<span style="left:465px;top:1087.0px;font-size:19.5px;color:#787878;letter-spacing:-0.27px;">[Synchronized]</span>
<div style="left:693px;top:997.5px;width:1435px;height:2.5px;background:#323232;"></div>
<div style="left:693px;top:997px;width:86.5px;height:3px;background:#747a80;"></div>
<span style="left:713.5px;top:962.0px;font-size:17.8px;color:#bbb;letter-spacing:-1.19px;">Server</span>
<svg style="left:800px;top:970px;overflow:visible;" width="19" height="15" viewBox="0 0 19 15"><rect width="18.500" height="14.500" fill="#afb1b3"/><polyline points="6.500,3.500 11,7.250 6.500,11" fill="none" stroke="#3c3f41" stroke-width="2"/></svg>
<span style="left:827.5px;top:962.0px;font-size:17.8px;color:#bbb;letter-spacing:-0.35px;">Tomcat Localhost Log</span>
<svg style="left:1011px;top:970.5px;overflow:visible;" width="12" height="12" viewBox="0 0 12 12"><path d="M1 1L11 11M11 1L1 11" stroke="#6e7073" stroke-width="1.3"/></svg>
<svg style="left:1061px;top:970px;overflow:visible;" width="19" height="15" viewBox="0 0 19 15"><rect width="18.500" height="14.500" fill="#afb1b3"/><polyline points="6.500,3.500 11,7.250 6.500,11" fill="none" stroke="#3c3f41" stroke-width="2"/></svg>
<span style="left:1088.5px;top:962.0px;font-size:17.8px;color:#bbb;letter-spacing:-0.32px;">Tomcat Catalina Log</span>
<svg style="left:1262px;top:970.5px;overflow:visible;" width="12" height="12" viewBox="0 0 12 12"><path d="M1 1L11 11M11 1L1 11" stroke="#6e7073" stroke-width="1.3"/></svg>
<span style="left:713.5px;top:1005.0px;font-size:17.8px;color:#bbb;letter-spacing:-0.28px;">Deployment</span>
<span style="left:1001px;top:1005.0px;font-size:17.8px;color:#bbb;letter-spacing:0.21px;">Output</span>
<div style="left:693px;top:1040px;width:1435px;height:1.5px;background:#323232;"></div>
<div style="left:979px;top:1000px;width:2px;height:317px;background:#323232;"></div>
<svg style="left:698px;top:1050.5px;overflow:visible;" width="20" height="16" viewBox="0 0 20 16"><path d="M1.500 7.500l5 5.500L18 1.500" fill="none" stroke="#499c54" stroke-width="3.400"/></svg>
<span style="left:725px;top:1043.0px;font-size:19.5px;color:#bbb;letter-spacing:-0.15px;">javaweb01:war exploded</span>
<svg style="left:948px;top:1052px;overflow:visible;" width="22" height="22" viewBox="0 0 22 22"><g transform="translate(11,11)" fill="none" stroke="#59a84b"><path d="M-11 0h20" stroke-width="2.200"/><polyline points="3.500,-6 9.700,0 3.500,6" stroke-width="2.200"/><path d="M-4.500 -3.500l5.500-5.500M-4.500 3.500l5.500 5.500" stroke-width="1.800"/><polyline points="-3.500,-9 1.500,-9 1.500,-4" stroke-width="1.800"/><polyline points="-3.500,9 1.500,9 1.500,4" stroke-width="1.800"/></g></svg>
<svg style="left:948px;top:1092px;overflow:visible;" width="22" height="22" viewBox="0 0 22 22"><g transform="translate(11,11)" fill="none" stroke="#5e6062"><path d="M-11 0h20" stroke-width="2.200"/><polyline points="3.500,-6 9.700,0 3.500,6" stroke-width="2.200"/><path d="M-4.500 -3.500l5.500-5.500M-4.500 3.500l5.500 5.500" stroke-width="1.800"/><polyline points="-3.500,-9 1.500,-9 1.500,-4" stroke-width="1.800"/><polyline points="-3.500,9 1.500,9 1.500,4" stroke-width="1.800"/></g></svg>
<svg style="left:948px;top:1131px;overflow:visible;" width="22" height="22" viewBox="0 0 22 22"><path d="M3.500 9.500a7.500 7.500 0 0 1 13.500-3M18.500 12.500a7.500 7.500 0 0 1-13.500 3" fill="none" stroke="#afb1b3" stroke-width="2.600"/><polygon points="19.500,2 19.500,9 12.500,8" fill="#afb1b3"/><polygon points="2.500,20 2.500,13 9.500,14" fill="#afb1b3"/></svg>
<svg style="left:948px;top:1169px;overflow:visible;" width="22" height="24" viewBox="0 0 22 24"><path d="M1.200 1.200h18.600v11.500h-3M1.200 1.200v11.500h6" fill="none" stroke="#afb1b3" stroke-width="2.400"/><rect x="0" y="0" width="21" height="4" fill="#afb1b3"/><path d="M12 8v13" stroke="#499c54" stroke-width="2.600"/><polygon points="6.500,15 17.500,15 12,22.500" fill="#499c54"/></svg>
<div style="left:981px;top:1041.5px;width:1104px;height:275px;background:#2b2b2b;"></div>
<div style="left:2085px;top:1041.5px;width:43px;height:275px;background:#3c3f41;"></div>
<div style="left:981px;top:1041.500px;width:1104px;height:263px;overflow:hidden;">
<span class="m" style="left:18.500px;top:4.8px;color:#bbbbbb;">Connected to server</span>
<span class="m" style="left:18.500px;top:36.25px;color:#bbbbbb;">[2021-03-06 10:09:35,775] Artifact javaweb01:war exploded: Artifact is being deployed, please wait...</span>
<span class="m" style="left:18.500px;top:67.7px;color:#ff6b68;">06-Mar-2021 10:09:36.000 <span style="font-size:18.500px;letter-spacing:1px;">警告</span> [RMI TCP Connection(3)-127.0.0.1] org.apache.tomcat.util.descriptor.web.WebXml.setVersion</span>
<span class="m" style="left:18.500px;top:99.14999999999999px;color:#bbbbbb;">[2021-03-06 10:09:36,097] Artifact javaweb01:war exploded: Artifact is deployed successfully</span>
<span class="m" style="left:18.500px;top:130.6px;color:#bbbbbb;">[2021-03-06 10:09:36,098] Artifact javaweb01:war exploded: Deploy took 322 milliseconds</span>
<span class="m" style="left:18.500px;top:162.05px;color:#ff6b68;">06-Mar-2021 10:09:45.403 <span style="font-size:18.500px;letter-spacing:1px;">信息</span> [localhost-startStop-1] org.apache.catalina.startup.HostConfig.deployDirectory</span>
<span class="m" style="left:18.500px;top:193.5px;color:#ff6b68;">06-Mar-2021 10:09:45.523 <span style="font-size:18.500px;letter-spacing:1px;">信息</span> [localhost-startStop-1] org.apache.catalina.startup.HostConfig.deployDirectory</span>
</div>
<div style="left:695px;top:1305px;width:237px;height:10.5px;background:#595b5d;"></div>
<div style="left:1001px;top:1305px;width:349px;height:10.5px;background:#595b5d;"></div>
<div style="left:2072.5px;top:1275px;width:11px;height:41px;background:#595b5d;"></div>
<svg style="left:2099.5px;top:1055px;overflow:visible;" width="16" height="18" viewBox="0 0 16 18"><path d="M8 2v16" stroke="#afb1b3" stroke-width="2.200"/><polyline points="1.500,8.500 8,2 14.500,8.500" fill="none" stroke="#afb1b3" stroke-width="2.200"/></svg>
<svg style="left:2099.5px;top:1093.5px;overflow:visible;" width="16" height="18" viewBox="0 0 16 18"><path d="M8 0v16" stroke="#afb1b3" stroke-width="2.200"/><polyline points="1.500,9.500 8,16 14.500,9.500" fill="none" stroke="#afb1b3" stroke-width="2.200"/></svg>
<svg style="left:2098px;top:1132px;overflow:visible;" width="20" height="21" viewBox="0 0 20 21"><path d="M0 2h19" stroke="#afb1b3" stroke-width="2.200"/><path d="M0 9h14a4 4 0 0 1 0 8h-4" fill="none" stroke="#afb1b3" stroke-width="2.200"/><polygon points="11,12.500 11,21 5.500,16.800" fill="#afb1b3"/><path d="M0 16.500h4" stroke="#afb1b3" stroke-width="2.200"/></svg>
<div style="left:2091px;top:1164.500px;width:33px;height:32px;background:#4c5052;border-radius:4px;"></div>
<svg style="left:2098px;top:1170px;overflow:visible;" width="20" height="21" viewBox="0 0 20 21"><path d="M0 5h8M0 11.500h8M0 19h19" stroke="#afb1b3" stroke-width="2.400"/><path d="M14 0v12" stroke="#afb1b3" stroke-width="2.400"/><polygon points="8.500,8 19.500,8 14,15" fill="#afb1b3"/></svg>
<svg style="left:2096px;top:1210px;overflow:visible;" width="23" height="21" viewBox="0 0 23 21"><rect x="5" y="0" width="13" height="5" fill="#afb1b3"/><path d="M0 7h23v10h-4v-5H4v5H0z" fill="#afb1b3"/><rect x="6" y="14" width="11" height="6.500" fill="none" stroke="#afb1b3" stroke-width="2"/></svg>
<svg style="left:2099px;top:1246px;overflow:visible;" width="17" height="23" viewBox="0 0 17 23"><rect x="5.500" y="0" width="6" height="3" fill="#afb1b3"/><rect x="0" y="2.500" width="17" height="3.500" fill="#afb1b3"/><path d="M1.500 7.500h14V20a2 2 0 0 1-2 2h-10a2 2 0 0 1-2-2z" fill="#afb1b3"/></svg>
<div style="left:0px;top:1316.5px;width:2160px;height:1.5px;background:#2b2d2e;"></div>
<div style="left:493px;top:1318px;width:116px;height:33px;background:#2d2f30;"></div>
<svg style="left:49px;top:1329px;overflow:visible;" width="16" height="13" viewBox="0 0 16 13"><path d="M0 1.300h2.500M0 6.300h2.500M0 11.300h2.500" stroke="#afb1b3" stroke-width="2.400"/><path d="M4.500 1.300H15.500M4.500 6.300H15.500M4.500 11.300H15.500" stroke="#afb1b3" stroke-width="2.400"/></svg>
<span style="left:72.5px;top:1322.0px;font-size:17.8px;color:#bbb;letter-spacing:-1.70px;">TODO</span>
<svg style="left:150px;top:1327px;overflow:visible;" width="16" height="16" viewBox="0 0 16 16"><circle cx="8" cy="8" r="7.800" fill="#afb1b3"/><rect x="6.800" y="3" width="2.400" height="6.500" fill="#3c3f41"/><rect x="6.800" y="11" width="2.400" height="2.400" fill="#3c3f41"/></svg>
<span style="left:174.5px;top:1322.0px;font-size:17.8px;color:#bbb;letter-spacing:-0.67px;">Problems</span>
<svg style="left:276.5px;top:1327px;overflow:visible;" width="17" height="16" viewBox="0 0 17 16"><rect width="17" height="15.500" fill="#afb1b3"/><polyline points="3.500,3.500 7.500,7 3.500,10.500" fill="none" stroke="#3c3f41" stroke-width="1.800"/><path d="M8.500 11.500h5" stroke="#3c3f41" stroke-width="1.800"/></svg>
<span style="left:302.5px;top:1322.0px;font-size:17.8px;color:#bbb;letter-spacing:-0.25px;">Terminal</span>
<svg style="left:396.5px;top:1326px;overflow:visible;" width="20" height="19" viewBox="0 0 20 19"><path d="M14.500 4.500A7 7 0 1 0 8 15.500" fill="none" stroke="#afb1b3" stroke-width="2"/><path d="M8 4v4.500l-2.500 2" fill="none" stroke="#afb1b3" stroke-width="1.600"/><polygon points="9.500,7 9.500,18.500 19.500,12.700" fill="#afb1b3"/></svg>
<span style="left:423.5px;top:1322.0px;font-size:17.8px;color:#bbb;letter-spacing:-0.27px;">Profiler</span>
<svg style="left:510px;top:1326px;overflow:visible;" width="21" height="20" viewBox="0 0 21 20"><path d="M5 1h9l5 8-5 8H5L0 9z" fill="#afb1b3"/><polygon points="6.500,4.500 6.500,13.500 14,9" fill="#2d2f30"/><circle cx="16.500" cy="15.500" r="3.400" fill="#22d12a" stroke="#2d2f30" stroke-width="1"/></svg>
<span style="left:536px;top:1322.0px;font-size:17.8px;color:#ffffff;letter-spacing:-1.18px;">Services</span>
<svg style="left:623px;top:1326px;overflow:visible;" width="21" height="19" viewBox="0 0 21 19"><path d="M2 6.500L7.500 1l6.500 3.500-3 3L19.500 16 16.500 19 8 10 6 12z" fill="#afb1b3"/></svg>
<span style="left:650px;top:1322.0px;font-size:17.8px;color:#bbb;letter-spacing:-0.52px;">Build</span>
<svg style="left:2013px;top:1326px;overflow:visible;" width="21" height="20" viewBox="0 0 21 20"><path d="M10 1.500a8.500 8.500 0 1 0 0 17h8.500V10A8.500 8.500 0 0 0 10 1.500z" fill="none" stroke="#afb1b3" stroke-width="2.200"/></svg>
<span style="left:2040px;top:1322.0px;font-size:17.8px;color:#bbb;letter-spacing:-0.83px;">Event Log</span>
<div style="left:0px;top:1351px;width:2160px;height:1px;background:#4b4d4f;"></div>
<svg style="left:9px;top:1358px;overflow:visible;" width="19" height="19" viewBox="0 0 19 19"><rect x="4.500" y="1" width="13" height="13" fill="none" stroke="#afb1b3" stroke-width="1.600"/><path d="M1 4.500V18h13.500" fill="none" stroke="#afb1b3" stroke-width="1.600"/></svg>
<span style="left:41.5px;top:1351.0px;font-size:19.5px;color:#bbb;letter-spacing:-0.17px;">Build completed successfully in 2 sec, 146 ms (50 minutes ago)</span>
<span style="left:1825.5px;top:1351.0px;font-size:19.5px;color:#bbb;letter-spacing:-0.82px;">12:22</span>
<span style="left:1890.5px;top:1351.0px;font-size:19.5px;color:#bbb;letter-spacing:-4.76px;">LF</span>
<span style="left:1929px;top:1351.0px;font-size:19.5px;color:#7a7a7a;letter-spacing:-1.19px;">UTF-8</span>
<span style="left:1998px;top:1351.0px;font-size:19.5px;color:#bbb;letter-spacing:-0.79px;">4 spaces</span>
<svg style="left:2088px;top:1357px;overflow:visible;" width="18" height="19" viewBox="0 0 18 19"><rect x="4" y="8.500" width="13" height="9.500" fill="#afb1b3"/><path d="M1.500 9V5.500a3.700 3.700 0 0 1 7.400 0V9" fill="none" stroke="#afb1b3" stroke-width="2"/></svg>
<svg style="left:2122px;top:1355px;overflow:visible;" width="27" height="25" viewBox="0 0 27 25"><path d="M6 16.500a5 5 0 0 1 .5-10 7 7 0 0 1 13 1.500 4.300 4.300 0 0 1 1.500 8z" fill="#afb1b3"/><path d="M9.500 6.800c.5-2.500 5-2.500 5 .3 0 2-2.500 2-2.500 4" fill="none" stroke="#3c3f41" stroke-width="1.800"/><rect x="11" y="12.500" width="2" height="2" fill="#3c3f41"/><circle cx="20" cy="19" r="6" fill="#3c3f41"/></svg>
<svg style="left:2135.5px;top:1367.5px;overflow:visible;" width="13.0" height="13.0" viewBox="0 0 13.0 13.0"><g transform="translate(6.5,6.5)"><rect x="-2.6" y="-5.5" width="5.2" height="5" transform="rotate(0)" fill="#afb1b3"/><rect x="-2.6" y="-5.5" width="5.2" height="5" transform="rotate(45)" fill="#afb1b3"/><rect x="-2.6" y="-5.5" width="5.2" height="5" transform="rotate(90)" fill="#afb1b3"/><rect x="-2.6" y="-5.5" width="5.2" height="5" transform="rotate(135)" fill="#afb1b3"/><rect x="-2.6" y="-5.5" width="5.2" height="5" transform="rotate(180)" fill="#afb1b3"/><rect x="-2.6" y="-5.5" width="5.2" height="5" transform="rotate(225)" fill="#afb1b3"/><rect x="-2.6" y="-5.5" width="5.2" height="5" transform="rotate(270)" fill="#afb1b3"/><rect x="-2.6" y="-5.5" width="5.2" height="5" transform="rotate(315)" fill="#afb1b3"/><circle r="4.07" fill="#afb1b3"/><circle r="1.98" fill="#3c3f41"/></g></svg>
<div style="left:0;top:1380px;width:2160px;height:60px;background:linear-gradient(90deg,#18232e 0%,#1a2530 40%,#1b2b38 100%);"></div>
<svg style="left:24px;top:1398px;overflow:visible;" width="25" height="25" viewBox="0 0 25 25"><path d="M0 3.500l10-1.400v9.400H0zM11.500 1.900L24.500 0v11.500H11.500zM0 13h10v9.400L0 21zM11.500 13h13v11.500l-13-1.900z" fill="#ffffff"/></svg>
<div style="left:73px;top:1381px;width:513px;height:59px;background:#f3f3f3;border:1px solid #c2c2c2;box-sizing:content-box;"></div>
<svg style="left:88px;top:1396px;overflow:visible;" width="30" height="28" viewBox="0 0 30 28"><circle cx="18.500" cy="10" r="7.300" fill="none" stroke="#1e1e1e" stroke-width="1.800"/><path d="M13.300 15.500L2.500 25.500" stroke="#1e1e1e" stroke-width="1.900"/></svg>
<span style="left:132px;top:1396.5px;font-size:24px;color:#2a2a2a;letter-spacing:0px;">在这里输入你要搜索的内容</span>
<div style="left:599px;top:1436.5px;width:61px;height:3.5px;background:#76b9ed;"></div>
<div style="left:674px;top:1436.5px;width:61px;height:3.5px;background:#76b9ed;"></div>
<div style="left:749px;top:1436.5px;width:61px;height:3.5px;background:#76b9ed;"></div>
<div style="left:824px;top:1436.5px;width:61px;height:3.5px;background:#76b9ed;"></div>
<svg style="left:612px;top:1393px;overflow:visible;" width="34" height="34" viewBox="0 0 34 34"><circle cx="17" cy="17" r="16.700" fill="#db4437"/><path d="M17 17L2.540 8.650A16.700 16.700 0 0 0 8.650 31.460z" fill="#0f9d58"/><path d="M17 17L2.540 8.650A16.700 16.700 0 0 0 8.650 31.460L17 17" fill="#0f9d58"/><path d="M17 17L8.650 31.460A16.700 16.700 0 0 0 17 33.700 16.700 16.700 0 0 0 31.460 8.650H17z" fill="#ffcd40"/><path d="M17 17L2.540 8.650A16.700 16.700 0 0 0 17 33.700L24 21z" fill="#0f9d58"/><circle cx="17" cy="17" r="7.800" fill="#f1f1f1"/><circle cx="17" cy="17" r="6.200" fill="#4285f4"/></svg>
<svg style="left:685px;top:1394px;overflow:visible;" width="37" height="32" viewBox="0 0 37 32"><rect x="8.500" y="0" width="27.500" height="32" rx="1.500" fill="#ca64ea"/><rect x="28" y="8" width="8" height="8" fill="#ae4bd5"/><rect x="28" y="16" width="8" height="8" fill="#9332bf"/><rect x="28" y="24" width="8" height="8" fill="#7719aa"/><rect x="0.800" y="6.800" width="18.400" height="18.400" rx="1.500" fill="#7719aa"/></svg>
<span style="left:689.8px;top:1395.0px;font-size:15px;color:#ffffff;font-weight:bold;">N</span>
<div style="left:761px;top:1392px;width:36px;height:36px;background:#f4001c;border-radius:7px;"></div>
<span style="left:765px;top:1395.0px;font-size:14px;color:#ffffff;font-weight:bold;letter-spacing:0px;">有道</span>
<svg style="left:836px;top:1391px;overflow:visible;" width="37" height="38" viewBox="0 0 37 38"><polygon points="3,12 8,2 21,0.500 27,8 14,17" fill="#fe2857"/><polygon points="1,17 6,12 10,20 3,24" fill="#fc801d"/><polygon points="4,24 12,18 18,30 6,37" fill="#c931c4"/><polygon points="22,4 36,12 34,27 22,37 14,30 20,14" fill="#087cfa"/><polygon points="22,37 34,27 36,12 30,20" fill="#0b5fd1"/><rect x="7.800" y="7.800" width="21.400" height="21.800" fill="#000"/><rect x="10.300" y="25" width="8" height="1.600" fill="#fff"/></svg>
<span style="left:845.5px;top:1391.3px;font-size:13.5px;color:#ffffff;font-weight:bold;letter-spacing:0px;font-family:'Liberation Mono',monospace;">IJ</span>
<svg style="left:910px;top:1391px;overflow:visible;" width="38" height="38" viewBox="0 0 38 38"><path d="M27 1l9.500 4.500v27L27 37 10 21.500 4 26.500 1 25V13l3-1.500 6 5z" fill="#0a7ccc"/><path d="M27 1l9.500 4.500v27L27 37z" fill="#25a9f0"/><path d="M27 10.500L14.500 19 27 27.500z" fill="#1a2530"/><path d="M1 13l3-1.500 23 26L27 37 1 25z" fill="#0a7ccc" opacity="0"/></svg>
<svg style="left:989px;top:1395px;overflow:visible;" width="31" height="31" viewBox="0 0 31 31"><defs><linearGradient id="pcg" x1="0" y1="0" x2="1" y2="1"><stop offset="0" stop-color="#21d789"/><stop offset="0.350" stop-color="#d4e83a"/><stop offset="1" stop-color="#fcf84a"/></linearGradient></defs><rect width="30.500" height="30.500" fill="url(#pcg)"/><rect x="4" y="4" width="22.500" height="22.500" fill="#000"/><rect x="6.500" y="21.500" width="8" height="1.600" fill="#fff"/></svg>
<span style="left:994.8px;top:1391.3px;font-size:12.5px;color:#ffffff;font-weight:bold;letter-spacing:0.3px;">PC</span>
<svg style="left:1725px;top:1404px;overflow:visible;" width="19" height="11" viewBox="0 0 19 11"><polyline points="0.500,10 9.250,1 18,10" fill="none" stroke="#fff" stroke-width="1.500"/></svg>
<svg style="left:1757px;top:1400px;overflow:visible;" width="26" height="18" viewBox="0 0 26 18"><rect x="6" y="4" width="18" height="12" fill="none" stroke="#fff" stroke-width="1.400"/><rect x="8" y="6" width="14" height="8" fill="#fff"/><rect x="24" y="7.500" width="1.800" height="5" fill="#fff"/><path d="M2.500 0.500v3M5.500 0.500v3M1 3.500h6v3.500l-2 2v3c0 2 2 2 3 2" fill="none" stroke="#fff" stroke-width="1.300"/></svg>
<svg style="left:1797px;top:1400px;overflow:visible;" width="21" height="21" viewBox="0 0 21 21"><circle cx="17.500" cy="18.500" r="1.800" fill="#fff"/><path d="M11.500 19.500a7 7 0 0 1 7-7" fill="none" stroke="#fff" stroke-width="1.500"/><path d="M6 19.500a12.500 12.500 0 0 1 12.500-12.500" fill="none" stroke="#fff" stroke-width="1.500"/><path d="M0.800 19.500A17.700 17.700 0 0 1 18.500 1.800" fill="none" stroke="#9aa3ab" stroke-width="1.500"/></svg>
<svg style="left:1831px;top:1399px;overflow:visible;" width="23" height="22" viewBox="0 0 23 22"><path d="M1 7.500h4l5.500-5.500v17.500L5 14H1z" fill="none" stroke="#fff" stroke-width="1.400"/><path d="M13.500 7.500a4.500 4.500 0 0 1 0 6.500" fill="none" stroke="#fff" stroke-width="1.300"/><path d="M16.300 4.500a8.500 8.500 0 0 1 0 12.500" fill="none" stroke="#c8ccd0" stroke-width="1.300"/><path d="M19 1.800a12.500 12.500 0 0 1 0 18" fill="none" stroke="#6c7780" stroke-width="1.300"/></svg>
<span style="left:1865px;top:1394.5px;font-size:22px;color:#ffffff;letter-spacing:0px;">中</span>
<span style="left:1927px;top:1381.5px;font-size:19px;color:#ffffff;letter-spacing:-0.39px;">10:59</span>
<span style="left:1910px;top:1409.5px;font-size:19px;color:#ffffff;letter-spacing:0.86px;">2021/3/6</span>
<svg style="left:2030px;top:1399px;overflow:visible;" width="29" height="23" viewBox="0 0 29 23"><path d="M0.500 0l4 4.500v18h-4zM28 0l-4 4.500v18h4zM5.500 4.500l8.750 10L23 4.500v7l-8.750 10L5.500 11.500z" fill="#fff"/></svg>
<svg style="left:2097px;top:1398px;overflow:visible;" width="25" height="24" viewBox="0 0 25 24"><path d="M1 1h23v16.500h-7l-4.500 4.500-4.500-4.500H1z" fill="none" stroke="#fff" stroke-width="1.400"/></svg>
<div style="left:2152.5px;top:1380px;width:1px;height:60px;background:#87909a;"></div>
</div></body></html>
